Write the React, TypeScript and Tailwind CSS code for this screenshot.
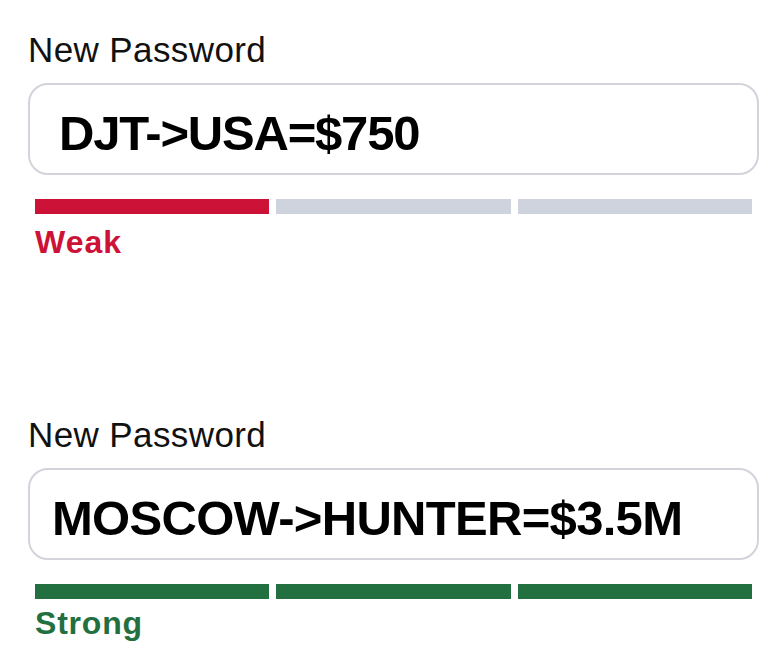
import React from 'react';

interface StrengthFieldProps {
  value: string;
  textClass: string;
  level: 'weak' | 'strong';
}

const StrengthField: React.FC<StrengthFieldProps> = ({ value, textClass, level }) => {
  const filled = level === 'weak' ? 1 : 3;
  const fill = level === 'weak' ? 'bg-[#cc1236]' : 'bg-[#226f40]';
  return (
    <div className="flex flex-col w-[731px]">
      <label className="text-[35px] leading-[40px] tracking-[0.4px] text-[#111]">New Password</label>
      <div className={`mt-[13px] h-[92px] border-2 border-[#d2d3db] rounded-[20px] bg-white flex items-center pt-2 ${level === 'weak' ? 'pl-[29px]' : 'pl-[22px]'}`}>
        <span className={`text-[49px] leading-[50px] font-bold text-black ${textClass}`}>{value}</span>
      </div>
      <div className="mt-[24px] px-[7px] grid grid-cols-3 gap-[7px]">
        {[0, 1, 2].map((i) => (
          <div key={i} className={`h-[15px] ${i < filled ? fill : 'bg-[#cfd3de]'}`} />
        ))}
      </div>
      {level === 'weak' ? (
        <span className="mt-[11px] ml-[7px] text-[32px] leading-[34px] font-bold tracking-[1px] text-[#cc1236]">Weak</span>
      ) : (
        <span className="mt-[7px] ml-[7px] text-[32px] leading-[34px] font-bold tracking-[0.8px] text-[#226f40]">Strong</span>
      )}
    </div>
  );
};

export default function App() {
  return (
    <div className="w-[778px] h-[660px] bg-white overflow-hidden pl-[28px] pt-[30px] font-['Liberation_Sans',Arial,sans-serif]">
      <StrengthField value="DJT->USA=$750" textClass="tracking-[-1.2px]" level="weak" />
      <div className="h-[156px]" />
      <StrengthField value="MOSCOW->HUNTER=$3.5M" textClass="tracking-[-0.7px]" level="strong" />
    </div>
  );
}
